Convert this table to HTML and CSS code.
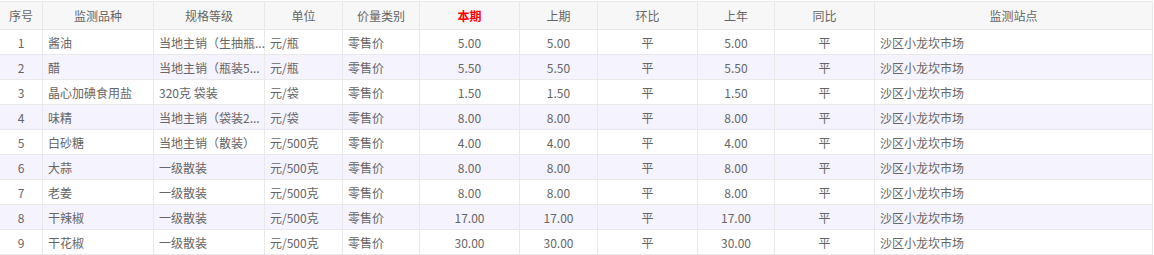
FILE: index.html
```html
<!DOCTYPE html>
<html lang="zh-CN">
<head>
<meta charset="utf-8">
<title>价格监测</title>
<link rel="stylesheet" href="styles.css">
</head>
<body>
<div class="grid" role="table">
  <div class="row head" role="row">
    <div class="c">序号</div>
    <div class="c">监测品种</div>
    <div class="c">规格等级</div>
    <div class="c">单位</div>
    <div class="c">价量类别</div>
    <div class="c now">本期</div>
    <div class="c">上期</div>
    <div class="c">环比</div>
    <div class="c">上年</div>
    <div class="c">同比</div>
    <div class="c">监测站点</div>
  </div>
  <div class="row" role="row">
    <div class="c">1</div><div class="c l">酱油</div><div class="c l">当地主销（生抽瓶...</div><div class="c l">元/瓶</div><div class="c l">零售价</div><div class="c">5.00</div><div class="c">5.00</div><div class="c">平</div><div class="c">5.00</div><div class="c">平</div><div class="c l">沙区小龙坎市场</div>
  </div>
  <div class="row alt" role="row">
    <div class="c">2</div><div class="c l">醋</div><div class="c l">当地主销（瓶装5...</div><div class="c l">元/瓶</div><div class="c l">零售价</div><div class="c">5.50</div><div class="c">5.50</div><div class="c">平</div><div class="c">5.50</div><div class="c">平</div><div class="c l">沙区小龙坎市场</div>
  </div>
  <div class="row" role="row">
    <div class="c">3</div><div class="c l">晶心加碘食用盐</div><div class="c l">320克 袋装</div><div class="c l">元/袋</div><div class="c l">零售价</div><div class="c">1.50</div><div class="c">1.50</div><div class="c">平</div><div class="c">1.50</div><div class="c">平</div><div class="c l">沙区小龙坎市场</div>
  </div>
  <div class="row alt" role="row">
    <div class="c">4</div><div class="c l">味精</div><div class="c l">当地主销（袋装2...</div><div class="c l">元/袋</div><div class="c l">零售价</div><div class="c">8.00</div><div class="c">8.00</div><div class="c">平</div><div class="c">8.00</div><div class="c">平</div><div class="c l">沙区小龙坎市场</div>
  </div>
  <div class="row" role="row">
    <div class="c">5</div><div class="c l">白砂糖</div><div class="c l">当地主销（散装）</div><div class="c l">元/500克</div><div class="c l">零售价</div><div class="c">4.00</div><div class="c">4.00</div><div class="c">平</div><div class="c">4.00</div><div class="c">平</div><div class="c l">沙区小龙坎市场</div>
  </div>
  <div class="row alt" role="row">
    <div class="c">6</div><div class="c l">大蒜</div><div class="c l">一级散装</div><div class="c l">元/500克</div><div class="c l">零售价</div><div class="c">8.00</div><div class="c">8.00</div><div class="c">平</div><div class="c">8.00</div><div class="c">平</div><div class="c l">沙区小龙坎市场</div>
  </div>
  <div class="row" role="row">
    <div class="c">7</div><div class="c l">老姜</div><div class="c l">一级散装</div><div class="c l">元/500克</div><div class="c l">零售价</div><div class="c">8.00</div><div class="c">8.00</div><div class="c">平</div><div class="c">8.00</div><div class="c">平</div><div class="c l">沙区小龙坎市场</div>
  </div>
  <div class="row alt" role="row">
    <div class="c">8</div><div class="c l">干辣椒</div><div class="c l">一级散装</div><div class="c l">元/500克</div><div class="c l">零售价</div><div class="c">17.00</div><div class="c">17.00</div><div class="c">平</div><div class="c">17.00</div><div class="c">平</div><div class="c l">沙区小龙坎市场</div>
  </div>
  <div class="row" role="row">
    <div class="c">9</div><div class="c l">干花椒</div><div class="c l">一级散装</div><div class="c l">元/500克</div><div class="c l">零售价</div><div class="c">30.00</div><div class="c">30.00</div><div class="c">平</div><div class="c">30.00</div><div class="c">平</div><div class="c l">沙区小龙坎市场</div>
  </div>
</div>
</body>
</html>
```

FILE: styles.css
```css
html, body {
  margin: 0;
  padding: 0;
  background: #fff;
}
body {
  font-family: "Noto Sans CJK SC", "Noto Sans", sans-serif;
  font-size: 12px;
  color: #666;
}
.grid {
  width: 1153px;
  margin-top: 1px;
  border-top: 1px solid #e9e9e9;
}
.row {
  display: grid;
  grid-template-columns: 43px 111px 111px 78px 77px 100px 78px 100px 77px 100px 278px;
  height: 25px;
}
.row.head {
  height: 28px;
  background: #f7f7f7;
}
.row.alt {
  background: #f5f3fd;
}
.c {
  box-sizing: border-box;
  border-right: 1px solid #e9e9e9;
  border-bottom: 1px solid #e9e9e9;
  padding: 0 5px;
  display: flex;
  align-items: center;
  justify-content: center;
  white-space: nowrap;
  min-width: 0;
}
.c.l {
  justify-content: flex-start;
  padding: 0 0 0 5px;
}
.now {
  color: #f00;
  font-weight: bold;
}
```
